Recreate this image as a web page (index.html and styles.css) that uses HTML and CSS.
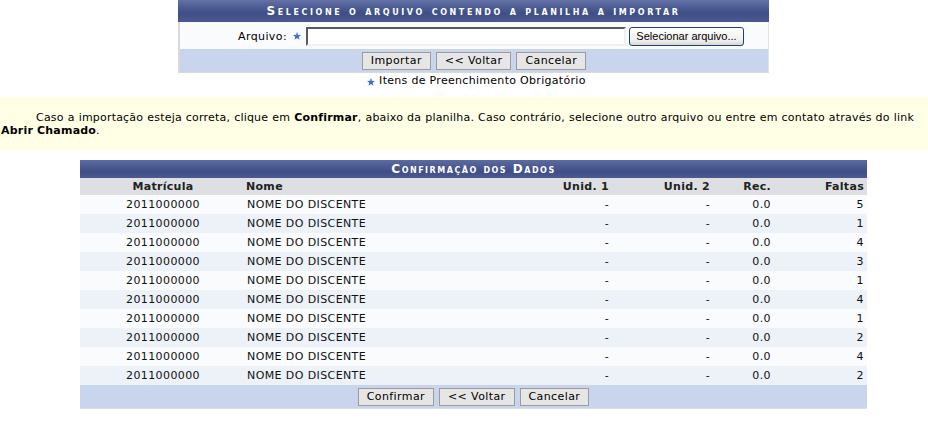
FILE: index.html
```html
<!DOCTYPE html>
<html lang="pt-BR">
<head>
<meta charset="utf-8">
<title>Importar planilha</title>
<link rel="stylesheet" href="styles.css">
</head>
<body>
<div class="wrap">
  <div class="form">
    <div class="form-head">Selecione o arquivo contendo a planilha a importar</div>
    <div class="form-body">
      <div class="label">Arquivo: <svg class="star" viewBox="0 0 10 10" width="8" height="8"><polygon points="5,0 6.3,3.4 10,3.6 7.1,5.9 8.1,9.6 5,7.5 1.9,9.6 2.9,5.9 0,3.6 3.7,3.4" fill="#3a6cc8"/><polygon points="5,1.5 5.9,3.9 4.4,4.4" fill="#9bb8ee"/></svg></div>
      <input class="file-input" type="text">
      <button class="file-btn" type="button">Selecionar arquivo...</button>
    </div>
    <div class="form-foot">
      <button class="btn" type="button">Importar</button>
      <button class="btn" type="button">&lt;&lt; Voltar</button>
      <button class="btn" type="button">Cancelar</button>
    </div>
  </div>
  <div class="obrig"><svg class="star" viewBox="0 0 10 10" width="8" height="8"><polygon points="5,0 6.3,3.4 10,3.6 7.1,5.9 8.1,9.6 5,7.5 1.9,9.6 2.9,5.9 0,3.6 3.7,3.4" fill="#3a6cc8"/><polygon points="5,1.5 5.9,3.9 4.4,4.4" fill="#9bb8ee"/></svg> Itens de Preenchimento Obrigatório</div>
</div>

<div class="aviso">
  <p>Caso a importação esteja correta, clique em <b>Confirmar</b>, abaixo da planilha. Caso contrário, selecione outro arquivo ou entre em contato através do link <b>Abrir Chamado</b>.</p>
</div>

<div class="wrap">
  <table class="listagem">
    <caption>Confirmação dos Dados</caption>
    <thead>
      <tr>
        <th class="c-mat">Matrícula</th>
        <th class="c-nome">Nome</th>
        <th class="c-num c-u1">Unid. 1</th>
        <th class="c-num c-u2">Unid. 2</th>
        <th class="c-num c-rec">Rec.</th>
        <th class="c-num c-fal">Faltas</th>
      </tr>
    </thead>
    <tbody>
      <tr><td class="c-mat">2011000000</td><td class="c-nome">NOME DO DISCENTE</td><td class="c-num">-</td><td class="c-num">-</td><td class="c-num">0.0</td><td class="c-num">5</td></tr>
      <tr><td class="c-mat">2011000000</td><td class="c-nome">NOME DO DISCENTE</td><td class="c-num">-</td><td class="c-num">-</td><td class="c-num">0.0</td><td class="c-num">1</td></tr>
      <tr><td class="c-mat">2011000000</td><td class="c-nome">NOME DO DISCENTE</td><td class="c-num">-</td><td class="c-num">-</td><td class="c-num">0.0</td><td class="c-num">4</td></tr>
      <tr><td class="c-mat">2011000000</td><td class="c-nome">NOME DO DISCENTE</td><td class="c-num">-</td><td class="c-num">-</td><td class="c-num">0.0</td><td class="c-num">3</td></tr>
      <tr><td class="c-mat">2011000000</td><td class="c-nome">NOME DO DISCENTE</td><td class="c-num">-</td><td class="c-num">-</td><td class="c-num">0.0</td><td class="c-num">1</td></tr>
      <tr><td class="c-mat">2011000000</td><td class="c-nome">NOME DO DISCENTE</td><td class="c-num">-</td><td class="c-num">-</td><td class="c-num">0.0</td><td class="c-num">4</td></tr>
      <tr><td class="c-mat">2011000000</td><td class="c-nome">NOME DO DISCENTE</td><td class="c-num">-</td><td class="c-num">-</td><td class="c-num">0.0</td><td class="c-num">1</td></tr>
      <tr><td class="c-mat">2011000000</td><td class="c-nome">NOME DO DISCENTE</td><td class="c-num">-</td><td class="c-num">-</td><td class="c-num">0.0</td><td class="c-num">2</td></tr>
      <tr><td class="c-mat">2011000000</td><td class="c-nome">NOME DO DISCENTE</td><td class="c-num">-</td><td class="c-num">-</td><td class="c-num">0.0</td><td class="c-num">4</td></tr>
      <tr><td class="c-mat">2011000000</td><td class="c-nome">NOME DO DISCENTE</td><td class="c-num">-</td><td class="c-num">-</td><td class="c-num">0.0</td><td class="c-num">2</td></tr>
    </tbody>
    <tfoot>
      <tr>
        <td colspan="6">
          <div class="foot-btns">
            <button class="btn" type="button">Confirmar</button>
            <button class="btn" type="button">&lt;&lt; Voltar</button>
            <button class="btn" type="button">Cancelar</button>
          </div>
        </td>
      </tr>
    </tfoot>
  </table>
</div>
</body>
</html>
```

FILE: styles.css
```css
html, body {
  margin: 0;
  padding: 0;
  background: #fff;
}
body {
  font-family: "DejaVu Sans", Verdana, sans-serif;
  font-size: 11px;
  letter-spacing: 0.4px;
  color: #000;
}
.wrap {
  padding-left: 19px;
}

/* ---- top form ---- */
.form {
  width: 591px;
  margin: 0 auto;
}
.form-head {
  height: 22px;
  line-height: 22px;
  text-align: center;
  color: #fff;
  font-weight: bold;
  font-variant: small-caps;
  letter-spacing: 2.6px;
  font-size: 12px;
  background: linear-gradient(#6272a6 0%, #4c5b92 35%, #3f4e86 60%, #4a5a91 100%);
}
.form-body {
  display: flex;
  align-items: center;
  height: 27px;
  background: #f9fbfd;
  border-left: 2px solid #d9d9d9;
  border-right: 1px solid #e4e4e4;
  padding-top: 1px;
  box-sizing: border-box;
}
.label {
  width: 121px;
  display: flex;
  justify-content: flex-end;
  align-items: center;
  gap: 6px;
}
.star {
  display: inline-block;
}
.file-input {
  margin: 0 0 0 5px;
  width: 320px;
  height: 19px;
  box-sizing: border-box;
  border: 2px solid #f0f0f0;
  border-top-color: #5a5a5a;
  border-left-color: #5a5a5a;
  background: #fff;
  padding: 0;
}
.file-btn {
  margin-left: 3px;
  width: 115px;
  height: 19px;
  box-sizing: border-box;
  border: 1px solid #1f3f78;
  border-radius: 3px;
  background: linear-gradient(#ffffff, #f1f1ee 70%, #d8d8d2);
  font-family: "Liberation Sans", Tahoma, sans-serif;
  font-size: 11px;
  letter-spacing: 0;
  color: #000;
  padding: 0;
}
.form-foot {
  height: 24px;
  display: flex;
  justify-content: center;
  align-items: center;
  gap: 5px;
  background: #c8d5ec;
  border-left: 2px solid #d9d9d9;
  border-right: 1px solid #e4e4e4;
  border-bottom: 1px solid #d9d9d9;
  box-sizing: border-box;
}
.btn {
  height: 18px;
  box-sizing: border-box;
  padding: 0 8px;
  border: 1px solid #9c9c9c;
  background: #e6e6e6;
  font-family: "DejaVu Sans", Verdana, sans-serif;
  font-size: 11px;
  letter-spacing: 0.4px;
  color: #000;
  line-height: 14px;
}
.obrig {
  text-align: center;
  margin-top: 0;
  height: 16px;
  line-height: 16px;
  padding-left: 6px;
  letter-spacing: 0.3px;
}
.obrig .star {
  vertical-align: -2px;
}

/* ---- notice ---- */
.aviso {
  margin-top: 8px;
  background: #ffffe6;
  height: 53px;
  box-sizing: border-box;
  padding: 14px 14px 0 1px;
}
.aviso p {
  margin: 0;
  text-indent: 35px;
  line-height: 13px;
  letter-spacing: 0.2px;
  text-align: justify;
}

/* ---- data table ---- */
.listagem {
  width: 787px;
  margin: 10px auto 0;
  border-collapse: collapse;
  table-layout: fixed;
}
.listagem caption {
  height: 18px;
  line-height: 18px;
  color: #fff;
  font-weight: bold;
  font-variant: small-caps;
  font-size: 12px;
  letter-spacing: 1.5px;
  background: linear-gradient(#5c6ca1 0%, #4a5990 40%, #3f4e86 65%, #4b5a91 100%);
}
.listagem th {
  height: 17px;
  padding: 0 3px;
  background: #dedfe3;
  font-weight: bold;
  color: #222;
  letter-spacing: 0.3px;
}
.listagem td {
  height: 19px;
  padding: 0 3px;
  color: #111;
}
.listagem tbody tr:nth-child(odd) td { background: #f9fbfd; }
.listagem tbody tr:nth-child(even) td { background: #edf1f8; }
.c-mat { width: 160px; text-align: center; }
.c-nome { text-align: left; }
td.c-nome { padding-left: 1px; }
th.c-nome { padding-left: 0; }
.c-num { text-align: right; }
.c-u1 { width: 96px; }
.c-u2 { width: 95px; }
.c-rec { width: 55px; }
.c-fal { width: 87px; }
.listagem tfoot td {
  background: #c8d5ec;
  height: 23px;
  padding: 0;
  border-bottom: 1px solid #dcdcdc;
}
.foot-btns {
  display: flex;
  justify-content: center;
  align-items: center;
  gap: 5px;
}
```
